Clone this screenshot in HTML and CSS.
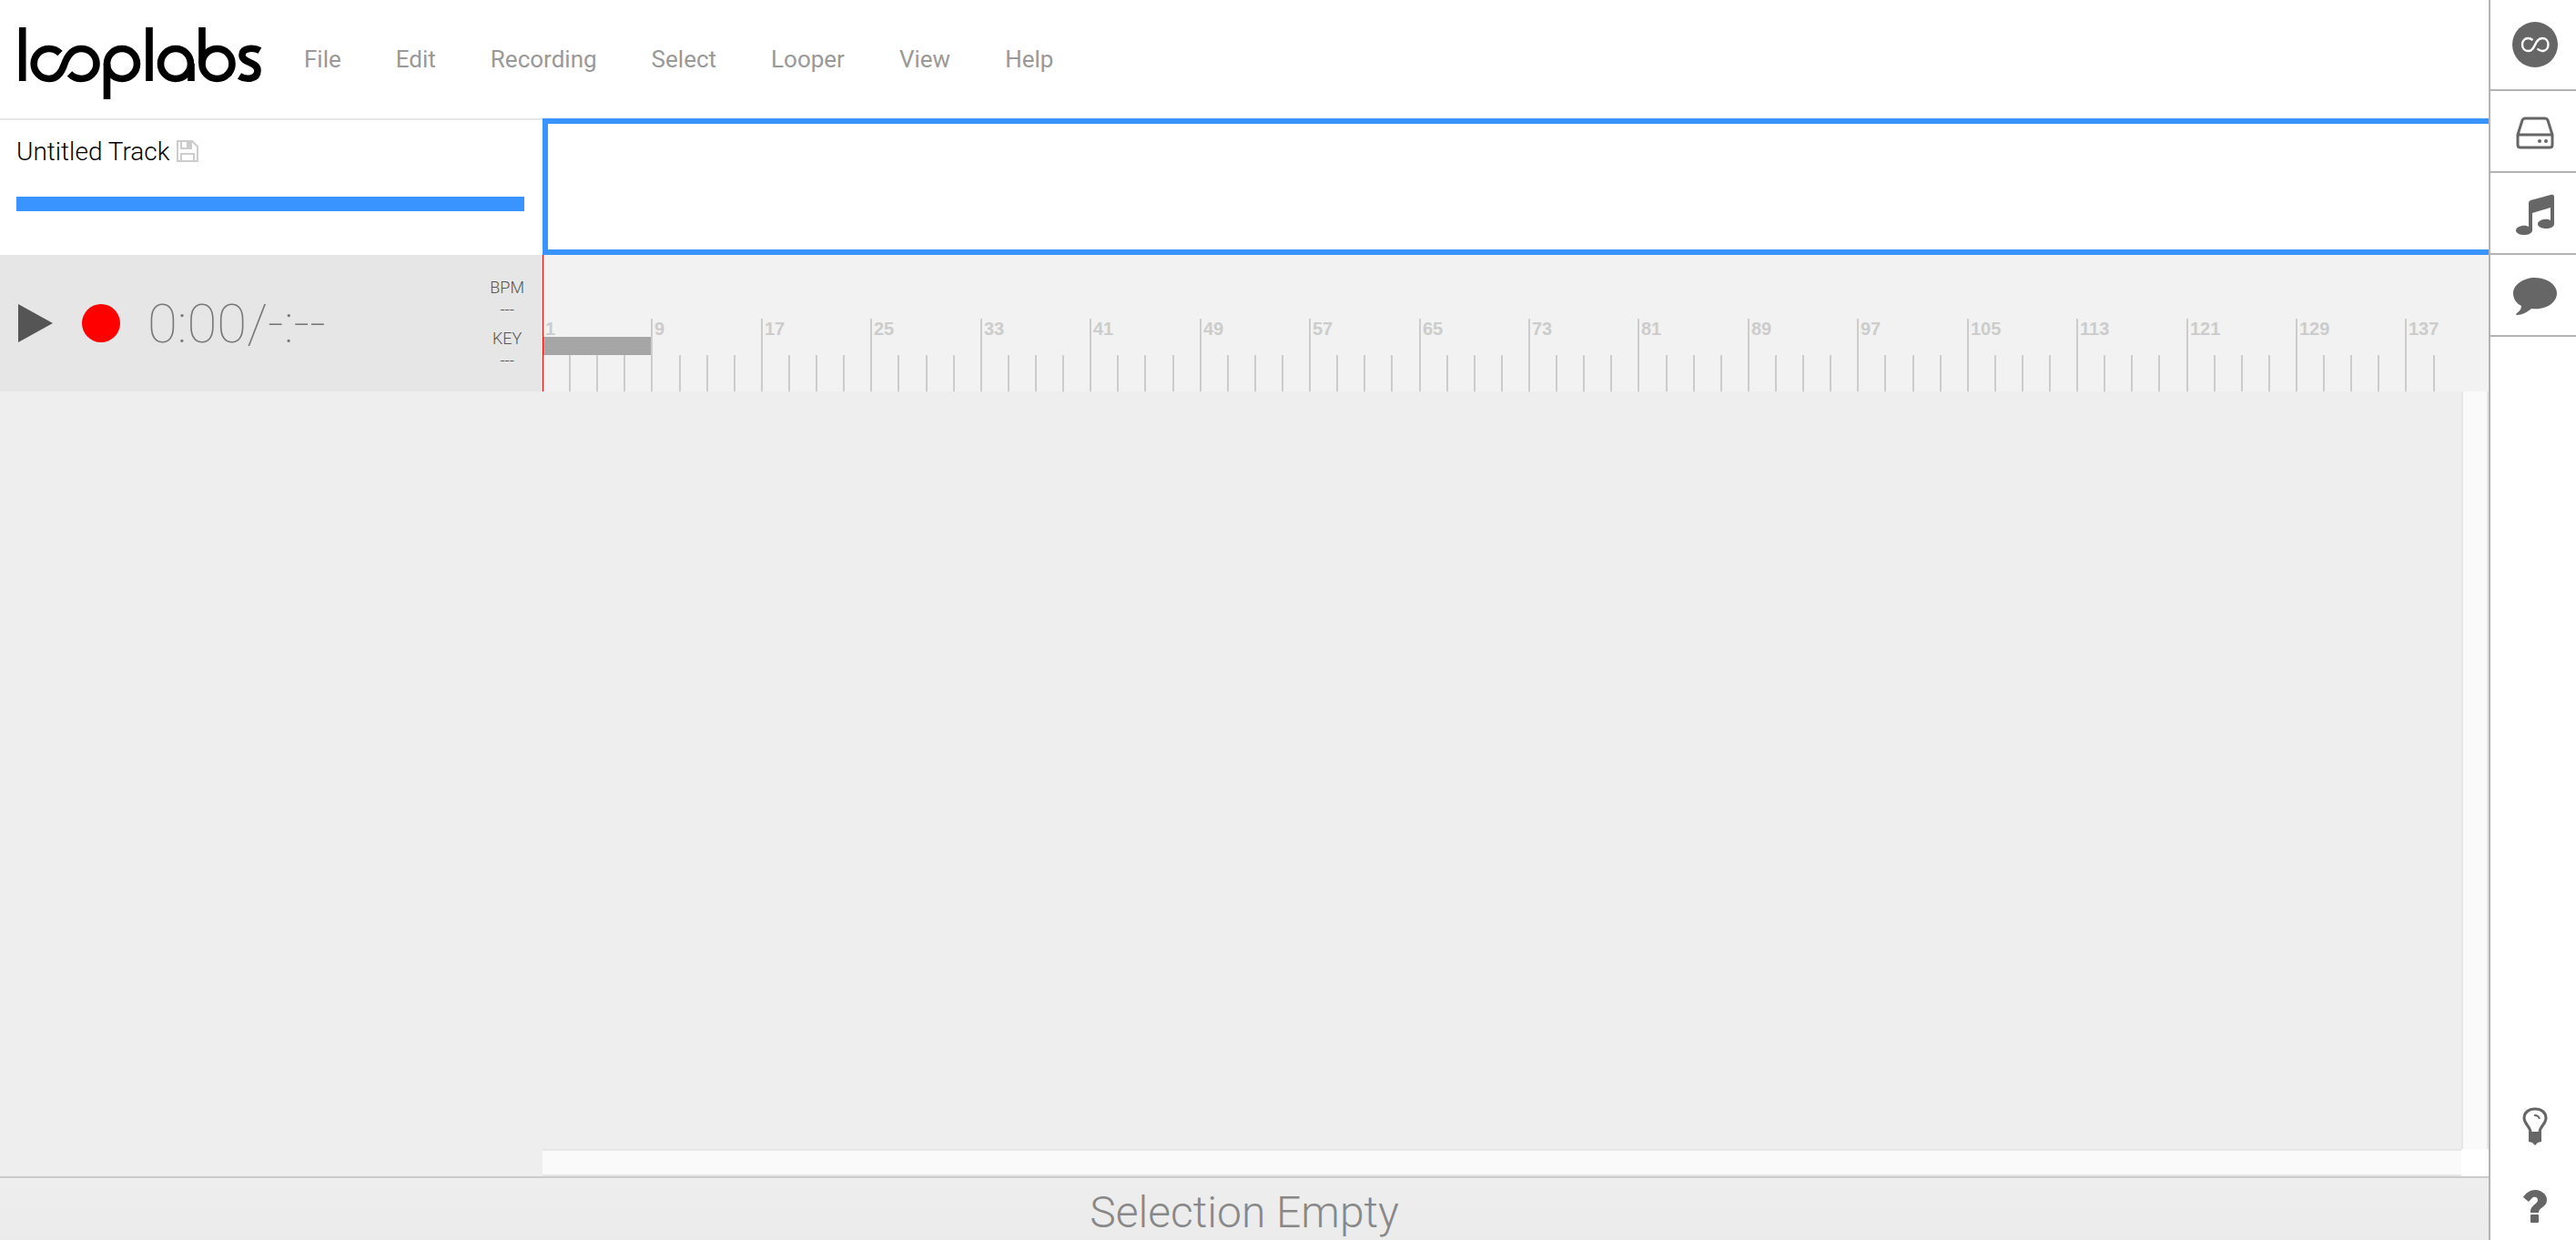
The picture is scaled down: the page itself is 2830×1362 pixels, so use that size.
FILE: index.html
```html
<!DOCTYPE html>
<html lang="en">
<head>
<meta charset="utf-8">
<title>looplabs</title>
<link rel="stylesheet" href="styles.css">
</head>
<body>
<div class="app">
  <div class="studio">
    <header class="topbar">
      <a class="logo" href="#" aria-label="looplabs">
        <svg width="270" height="84" viewBox="0 0 270 84" fill="none" stroke="#000" stroke-width="7.6">
          <path d="M4.7 0V59M144 0V59M202 0V40M97.5 79V40M190 40V59"/>
          <path d="M46 28.500C43 25.500 39 23.500 34 23.500C24.500 23.500 17.200 31 17.200 40C17.200 49 24.500 56.500 34 56.500C43 56.500 47.500 50 50.500 41C54 31 59 23.500 69.300 23.500C78.800 23.500 86 31 86 40C86 49 78.800 56.500 69.300 56.500C64 56.500 60 54.500 56.500 51"/>
          <circle cx="114" cy="40" r="16.500"/>
          <circle cx="173" cy="40" r="16.500"/>
          <circle cx="218.500" cy="40" r="16.500"/>
          <path d="M265.500 25.500C260 22.500 246 21.500 246 30.500C246 39.500 263 37.500 263 47.500C263 57.500 250 58 243 53.500"/>
        </svg>
      </a>
      <nav class="menu">
        <button>File</button><button>Edit</button><button>Recording</button><button>Select</button><button>Looper</button><button>View</button><button>Help</button>
      </nav>
    </header>

    <section class="overview">
      <div class="track-info">
        <div class="track-name">
          <span>Untitled Track</span>
          <button aria-label="Save">
            <svg width="25" height="25" viewBox="0 0 25 25" fill="none" stroke="#ccc" stroke-width="2"><path d="M1 1H17L23 7V23H1ZM5 23V15H19V23M5 1V9H16V1"/><path d="M11 2H15V8H11Z" fill="#ccc" stroke="none"/></svg>
          </button>
        </div>
        <div class="level"></div>
      </div>
      <div class="minimap"></div>
    </section>

    <section class="transport">
      <div class="controls">
        <button class="play" aria-label="Play"><svg width="38" height="42" viewBox="0 0 38 42"><path d="M0 0L38 21L0 42Z" fill="#555"/></svg></button>
        <button class="record" aria-label="Record"></button>
        <div class="clock">0:00/-:--</div>
        <div class="tempo"><span>BPM</span><span>---</span><span>KEY</span><span>---</span></div>
      </div>
      <div class="ruler" id="ruler"><div class="loop-range"></div></div>
    </section>

    <main class="tracks">
      <div class="headers"></div>
      <div class="lanes"></div>
      <div class="scroll-y"></div>
      <div class="scroll-x"></div>
      <div class="corner"></div>
    </main>

    <footer class="selection">Selection Empty</footer>
  </div>

  <aside class="rail">
    <button class="tool first" aria-label="Looplabs"><svg width="50" height="50" viewBox="0 0 50 50" fill="none"><circle cx="25" cy="25" r="25" fill="#666"/><path d="M22.500 20C20.500 18.500 19.500 18 17.500 18C13.500 18 11 21 11 25C11 29 13.500 32 17.500 32C26 32 24 18 33 18C37 18 39.500 21 39.500 25C39.500 29 37 32 33 32C31 32 29.500 31.500 27.500 29.500" stroke="#fff" stroke-width="2.400"/></svg></button>
    <button class="tool" aria-label="Library"><svg width="42" height="36" viewBox="0 0 42 36" fill="none" stroke="#666" stroke-width="3"><path d="M2 20L7 4Q8 2 10 2H32Q34 2 35 4L40 20V31Q40 34 37 34H5Q2 34 2 31ZM2 20H40"/><circle cx="26" cy="27" r="2" fill="#666" stroke="none"/><circle cx="33" cy="27" r="2" fill="#666" stroke="none"/></svg></button>
    <button class="tool" aria-label="Music"><svg width="42" height="46" viewBox="0 0 42 46" fill="#666"><path d="M14 10Q14 8 16 7L38 1Q42 0 42 3V33C42 36 38 38 33 38C28 38 24 36 24 33C24 29 33 26 38 29V15L18 21V40C18 43 14 45 9 45C4 45 0 43 0 40C0 36 9 33 14 36Z"/></svg></button>
    <button class="tool" aria-label="Chat"><svg width="48" height="42" viewBox="0 0 48 42" fill="#666"><path d="M24 0C37 0 48 8 48 17C48 28 35 36 20 34C15 38 10 41 4 41C3 41 3 40 4 39C7 37 9 34 9 31C3 28 0 23 0 17C0 8 11 0 24 0Z"/></svg></button>
    <div class="grow"></div>
    <button class="tool plain" aria-label="Tips"><svg width="28" height="42" viewBox="0 0 28 42" fill="none" stroke="#666" stroke-width="3"><path d="M9 28C9 21 2 19 2 12C2 6 7 2 14 2C21 2 26 6 26 12C26 19 19 21 19 28"/><path d="M13 9Q18 9 19 13" stroke-width="2"/><path d="M7 27H21V38L17 39L14 42L11 39L7 38Z" fill="#666" stroke="none"/></svg></button>
    <button class="tool plain" aria-label="Help"><svg width="26" height="36" viewBox="0 0 26 36" fill="#666"><path d="M0 8C3 3 8 0 13 0C19 0 26 4 26 11C26 19 17 19 17 25H8C7 17 16 16 16 11C16 8 13 7 11 8C9 9 8 11 6 13Z"/><rect x="8" y="27" width="9" height="9" rx="1"/></svg></button>
  </aside>
</div>
<script src="ruler.js"></script>
</body>
</html>
```
FILE: styles.css
```css
* { box-sizing: border-box; }
body { margin: 0; font-family: Roboto, sans-serif; background: #fff; }
button { border: 0; padding: 0; margin: 0; background: none; font: inherit; color: inherit; cursor: pointer; }
svg { display: block; }
.app { display: flex; min-height: 100vh; }
.studio { flex: 1; min-width: 0; display: flex; flex-direction: column; }

.topbar { display: flex; height: 130px; padding-left: 20px; }
.logo { padding-top: 30px; }
.menu { display: flex; gap: 60px; margin-left: 44px; height: 130px; align-items: center; color: #999; font-size: 26px; }

.overview { display: flex; height: 150px; }
.track-info { width: 596px; border-top: 2px solid #e6e6e6; padding: 18px 20px 0 18px; }
.track-name { display: flex; align-items: center; gap: 8px; height: 32px; font-size: 28px; font-weight: 300; color: #000; }
.level { height: 16px; margin-top: 34px; background: #3994ff; }
.minimap { flex: 1; border: 6px solid #3994ff; border-right: 0; }

.transport { display: flex; height: 150px; }
.controls { width: 596px; display: flex; align-items: center; padding: 0 20px; background: #e6e6e6; color: #777; }
.record { width: 42px; height: 42px; margin-left: 32px; border-radius: 50%; background: #f00; }
.clock { margin-left: 30px; font-size: 60px; font-weight: 100; }
.tempo { display: grid; grid-template-rows: 24px 32px 24px 32px; margin-left: auto; padding-top: 10px; text-align: center; font-size: 18px; line-height: 24px; font-weight: 300; color: #555; }
.ruler { flex: 1; min-width: 0; position: relative; overflow: hidden; background: #f2f2f2; border-left: 1px solid #f00; }
.mark { position: absolute; bottom: 0; height: 40px; border-left: 2px solid #ccc; }
.mark.major { height: 80px; padding-left: 2px; font: bold 20px/22px "Liberation Sans", sans-serif; color: #ccc; }
.loop-range { position: absolute; left: 0; bottom: 40px; width: 120px; height: 20px; background: #a6a6a6; }

.tracks { flex: 1; display: grid; grid-template: 1fr 30px / 596px 1fr 30px; background: #eee; }
.headers { grid-row: span 2; }
.scroll-y { border: solid #e6e6e6; border-width: 0 2px; background: #fafafa; }
.scroll-x { grid-column: 2; border: solid #e6e6e6; border-width: 2px 0; background: #fafafa; }
.corner { background: #fff; }

.selection { height: 70px; border-top: 2px solid #ccc; background: linear-gradient(#eee, #ebebeb); color: #888; font-size: 48px; font-weight: 300; line-height: 76px; text-align: center; }

.rail { width: 96px; border-left: 2px solid #b3b3b3; display: flex; flex-direction: column; background: #fff; }
.tool { height: 90px; padding: 4px 0 0 4px; border-bottom: 2px solid #b3b3b3; display: flex; align-items: center; justify-content: center; }
.tool.first { height: 100px; padding-top: 0; }
.tool.plain { height: 88px; padding-top: 14px; border: 0; }
.grow { flex: 1; }
```
FILE: ruler.js
```js
// Ticks are drawn every two measures and numbered every eight.
const ruler = document.getElementById('ruler');
const step = 30.11;
for (let i = 0; i < 70; i++) {
  const mark = document.createElement('div');
  mark.className = 'mark';
  mark.style.left = Math.round(i * step - 2) + 'px';
  if (i % 4 === 0) {
    mark.classList.add('major');
    mark.textContent = i * 2 + 1;
  }
  ruler.append(mark);
}
```
